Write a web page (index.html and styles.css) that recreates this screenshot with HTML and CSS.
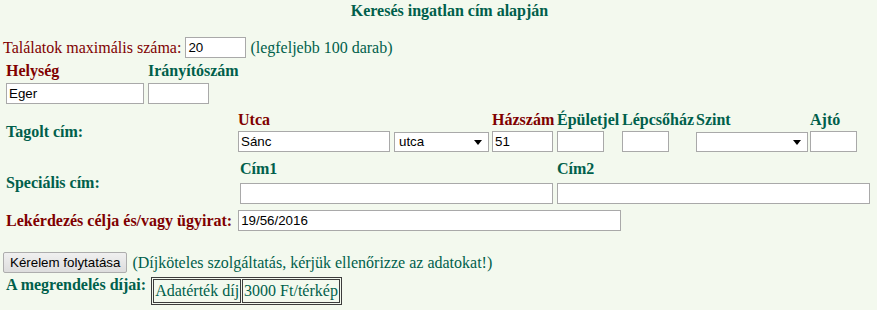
FILE: index.html
```html
<!DOCTYPE html>
<html lang="hu">
<head>
    <meta charset="UTF-8">
    <title>Keresés ingatlan cím alapján</title>
    <link rel="stylesheet" href="styles.css">
</head>
<body>
    <div class="title">Keresés ingatlan cím alapján</div>

    <div class="limit-row">
        <span class="red">Találatok maximális száma:</span>
        <input type="text" class="field w61" value="20">
        <span class="green">(legfeljebb 100 darab)</span>
    </div>

    <!-- Helység / irányítószám -->
    <div class="place-grid">
        <div class="lbl red">Helység</div>
        <div class="lbl green">Irányítószám</div>
        <input type="text" class="field w138" value="Eger">
        <input type="text" class="field w61">
    </div>

    <!-- Tagolt cím -->
    <div class="addr-row">
        <div class="row-label tagolt-label">Tagolt cím:</div>
        <div class="split-grid">
            <div class="lbl red">Utca</div>
            <div></div>
            <div class="lbl red">Házszám</div>
            <div class="lbl green">Épületjel</div>
            <div class="lbl green">Lépcsőház</div>
            <div class="lbl green">Szint</div>
            <div class="lbl green">Ajtó</div>

            <input type="text" class="field w152" value="Sánc">
            <span class="select-wrap w95">
                <select class="select"><option>utca</option></select>
            </span>
            <input type="text" class="field w61" value="51">
            <input type="text" class="field w47">
            <input type="text" class="field w47">
            <span class="select-wrap w112">
                <select class="select"><option></option></select>
            </span>
            <input type="text" class="field w47">
        </div>
    </div>

    <!-- Speciális cím -->
    <div class="addr-row special-row">
        <div class="row-label special-label">Speciális cím:</div>
        <div class="special-grid">
            <div class="lbl green">Cím1</div>
            <div class="lbl green">Cím2</div>
            <input type="text" class="field w313">
            <input type="text" class="field w313">
        </div>
    </div>

    <div class="purpose-row">
        <div class="row-label red">Lekérdezés célja és/vagy ügyirat:</div>
        <input type="text" class="field w383" value="19/56/2016">
    </div>

    <div class="submit-row">
        <button type="button" class="btn">Kérelem folytatása</button>
        <span class="green">(Díjköteles szolgáltatás, kérjük ellenőrizze az adatokat!)</span>
    </div>

    <div class="fee-row">
        <div class="row-label fee-label">A megrendelés díjai:</div>
        <table class="fee-table">
            <tr>
                <td>Adatérték díj</td>
                <td>3000 Ft/térkép</td>
            </tr>
        </table>
    </div>
</body>
</html>
```

FILE: styles.css
```css
body {
    margin: 0;
    padding: 0 0 0 3px;
    background-color: #f3f9ee;
    font-family: "Liberation Serif", "Times New Roman", serif;
    font-size: 16px;
    line-height: 18px;
    color: #005f4b;
}

.red {
    color: #800000;
}

.green {
    color: #005f4b;
}

.title {
    padding: 2px 0 0 19px;
    text-align: center;
    font-weight: bold;
}

/* Form fields */
.field {
    box-sizing: border-box;
    height: 21px;
    margin: 0;
    padding: 1px 2px;
    border: 1px solid #a9a9a9;
    background-color: #fff;
    font-family: "Liberation Sans", Arial, sans-serif;
    font-size: 13.33px;
    color: #000;
}

.w47 { width: 47px; }
.w61 { width: 61px; }
.w95 { width: 95px; }
.w112 { width: 112px; }
.w138 { width: 138px; }
.w152 { width: 152px; }
.w313 { width: 313px; }
.w383 { width: 383px; }

.select-wrap {
    position: relative;
    display: block;
    height: 20px;
    align-self: center;
}

.select-wrap::after {
    content: "";
    position: absolute;
    right: 7px;
    top: 8px;
    border-left: 4px solid transparent;
    border-right: 4px solid transparent;
    border-top: 5px solid #000;
    pointer-events: none;
}

.select {
    appearance: none;
    -webkit-appearance: none;
    box-sizing: border-box;
    width: 100%;
    height: 20px;
    margin: 0;
    padding: 0 0 0 4px;
    border: 1px solid #a9a9a9;
    border-radius: 0;
    background-color: #fff;
    font-family: "Liberation Sans", Arial, sans-serif;
    font-size: 13.33px;
    color: #000;
}

.lbl {
    font-weight: bold;
    white-space: nowrap;
}

.row-label {
    font-weight: bold;
    white-space: nowrap;
}

/* Rows */
.limit-row {
    display: flex;
    align-items: center;
    gap: 4px;
    margin-top: 17px;
}

.place-grid {
    display: grid;
    grid-template-columns: 142px 61px;
    grid-template-rows: 18px 21px;
    row-gap: 3px;
    margin: 4px 0 0 3px;
}

.addr-row {
    display: flex;
    align-items: flex-start;
    margin: 7px 0 0 3px;
}

.tagolt-label {
    width: 232px;
    margin-top: 12px;
}

.split-grid {
    display: grid;
    grid-template-columns: 156px 98px 65px 65px 74px 114px 47px;
    grid-template-rows: 18px 21px;
    row-gap: 2px;
}

.special-row {
    margin-top: 8px;
}

.special-label {
    width: 234px;
    margin-top: 14px;
}

.special-grid {
    display: grid;
    grid-template-columns: 317px 313px;
    grid-template-rows: 18px 21px;
    row-gap: 5px;
}

.purpose-row {
    display: flex;
    align-items: center;
    gap: 6px;
    margin: 6px 0 0 3px;
}

.submit-row {
    display: flex;
    align-items: center;
    gap: 5px;
    margin-top: 21px;
}

.btn {
    box-sizing: border-box;
    height: 21px;
    margin: 0;
    padding: 1px 6px;
    border: 1px solid #adadad;
    border-radius: 2px;
    background: linear-gradient(#f0f0f0, #dddddd);
    font-family: "Liberation Sans", Arial, sans-serif;
    font-size: 13.33px;
    color: #000;
}

.fee-row {
    display: flex;
    align-items: flex-start;
    gap: 5px;
    margin: 0 0 0 3px;
}

.fee-label {
    margin-top: 3px;
}

.fee-table {
    margin-top: 4px;
    border: 1px solid #3c3c3c;
    border-spacing: 1px;
}

.fee-table td {
    padding: 1px;
    border: 1px solid #3c3c3c;
    line-height: 20px;
    white-space: nowrap;
}
```
